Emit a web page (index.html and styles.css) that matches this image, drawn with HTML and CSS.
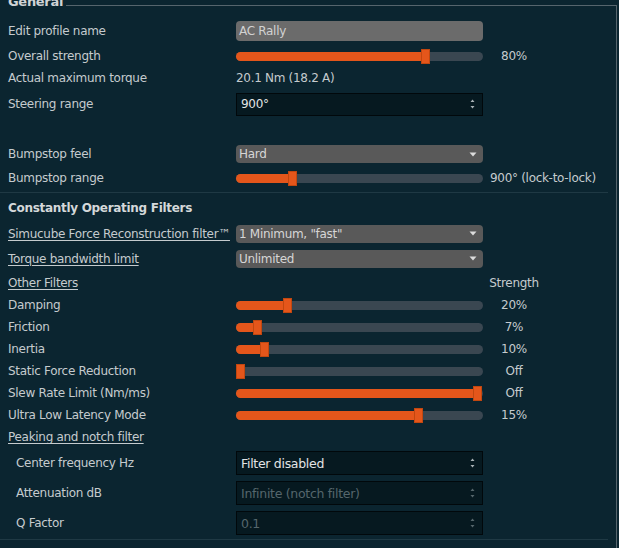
FILE: index.html
```html
<!DOCTYPE html>
<html>
<head>
<meta charset="utf-8">
<link rel="stylesheet" href="styles.css">
</head>
<body>
<div class="frame">
  <div class="legend">General</div>

  <div class="row h24">
    <span class="lbl">Edit profile name</span>
    <div class="edit">AC Rally</div>
  </div>
  <div class="row h26">
    <span class="lbl">Overall strength</span>
    <div class="track"><div class="fill" style="width:190px"><span class="handle"></span></div></div>
    <span class="val">80%</span>
  </div>
  <div class="row h18">
    <span class="lbl">Actual maximum torque</span>
    <span class="txt">20.1 Nm (18.2 A)</span>
  </div>
  <div class="row h34">
    <span class="lbl">Steering range</span>
    <div class="spin"><span>900°</span><svg class="arrows" width="7" height="14" viewBox="0 0 7 14"><path d="M1.5 5 L3.5 2.5 L5.5 5 Z M1.5 9 L3.5 11.5 L5.5 9 Z" fill="#a9b2b6"/></svg></div>
  </div>

  <div class="row h22 gap22">
    <span class="lbl">Bumpstop feel</span>
    <div class="combo"><span>Hard</span><svg class="caret" width="8" height="5" viewBox="0 0 8 5"><path d="M0.5 0.5 L7.5 0.5 L4 4.5 Z" fill="#dcdcdc"/></svg></div>
  </div>
  <div class="row h26">
    <span class="lbl">Bumpstop range</span>
    <div class="track"><div class="fill" style="width:57px"><span class="handle"></span></div></div>
    <span class="val left">900° (lock-to-lock)</span>
  </div>

  <div class="sep"></div>

  <div class="row h29">
    <span class="lbl bold">Constantly Operating Filters</span>
  </div>
  <div class="row h23">
    <span class="lbl link">Simucube Force Reconstruction filter™</span>
    <div class="combo"><span>1 Minimum, "fast"</span><svg class="caret" width="8" height="5" viewBox="0 0 8 5"><path d="M0.5 0.5 L7.5 0.5 L4 4.5 Z" fill="#dcdcdc"/></svg></div>
  </div>
  <div class="row h27">
    <span class="lbl link">Torque bandwidth limit</span>
    <div class="combo"><span>Unlimited</span><svg class="caret" width="8" height="5" viewBox="0 0 8 5"><path d="M0.5 0.5 L7.5 0.5 L4 4.5 Z" fill="#dcdcdc"/></svg></div>
  </div>
  <div class="row h22">
    <span class="lbl link">Other Filters</span>
    <span></span>
    <span class="val">Strength</span>
  </div>
  <div class="row h22">
    <span class="lbl">Damping</span>
    <div class="track"><div class="fill" style="width:52px"><span class="handle"></span></div></div>
    <span class="val">20%</span>
  </div>
  <div class="row h22">
    <span class="lbl">Friction</span>
    <div class="track"><div class="fill" style="width:22px"><span class="handle"></span></div></div>
    <span class="val">7%</span>
  </div>
  <div class="row h22">
    <span class="lbl">Inertia</span>
    <div class="track"><div class="fill" style="width:29px"><span class="handle"></span></div></div>
    <span class="val">10%</span>
  </div>
  <div class="row h22">
    <span class="lbl">Static Force Reduction</span>
    <div class="track"><div class="fill" style="width:5px"><span class="handle"></span></div></div>
    <span class="val">Off</span>
  </div>
  <div class="row h22">
    <span class="lbl">Slew Rate Limit (Nm/ms)</span>
    <div class="track"><div class="fill" style="width:242px"><span class="handle"></span></div></div>
    <span class="val">Off</span>
  </div>
  <div class="row h22">
    <span class="lbl">Ultra Low Latency Mode</span>
    <div class="track"><div class="fill" style="width:183px"><span class="handle"></span></div></div>
    <span class="val">15%</span>
  </div>
  <div class="row h22">
    <span class="lbl link">Peaking and notch filter</span>
  </div>
  <div class="row h30">
    <span class="lbl indent">Center frequency Hz</span>
    <div class="spin tall"><span>Filter disabled</span><svg class="arrows" width="7" height="14" viewBox="0 0 7 14"><path d="M1.5 5 L3.5 2.5 L5.5 5 Z M1.5 9 L3.5 11.5 L5.5 9 Z" fill="#a9b2b6"/></svg></div>
  </div>
  <div class="row h30">
    <span class="lbl indent">Attenuation dB</span>
    <div class="spin tall off"><span>Infinite (notch filter)</span><svg class="arrows" width="7" height="14" viewBox="0 0 7 14"><path d="M1.5 5 L3.5 2.5 L5.5 5 Z M1.5 9 L3.5 11.5 L5.5 9 Z" fill="#56666c"/></svg></div>
  </div>
  <div class="row h30">
    <span class="lbl indent">Q Factor</span>
    <div class="spin tall off"><span>0.1</span><svg class="arrows" width="7" height="14" viewBox="0 0 7 14"><path d="M1.5 5 L3.5 2.5 L5.5 5 Z M1.5 9 L3.5 11.5 L5.5 9 Z" fill="#56666c"/></svg></div>
  </div>
  <div class="sep bottom"></div>
</div>
</body>
</html>
```
FILE: styles.css
```css
html, body {
  margin: 0;
  padding: 0;
  background: #0b2530;
  overflow: hidden;
}
body {
  width: 619px;
  height: 548px;
  font-family: "DejaVu Sans", sans-serif;
  font-size: 12px;
  letter-spacing: -0.3px;
  color: #c5cbce;
}
.frame {
  position: relative;
  margin-top: 5px;
  width: 617px;
  height: 543px;
  border-top: 1px solid #56656d;
  border-right: 1px solid #56656d;
  padding-top: 13px;
  box-sizing: border-box;
}
.legend {
  position: absolute;
  left: 0;
  top: -12px;
  padding: 0 3px 0 8px;
  background: #0b2530;
  font-weight: bold;
  font-size: 13px;
  line-height: 16px;
  color: #d0d4d6;
}
.row {
  display: grid;
  grid-template-columns: 228px 247px 62px;
  align-items: center;
  padding-left: 8px;
}
.h18 { height: 18px; }
.h22 { height: 22px; }
.h23 { height: 23px; }
.h24 { height: 24px; }
.h26 { height: 26px; }
.h27 { height: 27px; }
.h29 { height: 29px; }
.h30 { height: 30px; }
.h34 { height: 34px; }
.gap22 { margin-top: 22px; }
.lbl { white-space: nowrap; }
.bold { font-weight: bold; color: #d4d8da; }
.link { text-decoration: underline; text-underline-offset: 2px; }
.indent { padding-left: 8px; }
.txt { white-space: nowrap; }
.val {
  text-align: center;
  white-space: nowrap;
}
.val.left {
  text-align: left;
  padding-left: 7px;
}
.edit {
  height: 20px;
  background: #6b6b6b;
  border-radius: 4px;
  color: #d2d2d2;
  padding-left: 3px;
  line-height: 20px;
}
.combo {
  height: 18px;
  background: #595959;
  border-radius: 4px;
  color: #d6d6d6;
  padding: 0 6px 0 3px;
  line-height: 18px;
  display: flex;
  align-items: center;
  justify-content: space-between;
}
.caret { display: block; }
.track {
  position: relative;
  height: 9px;
  background: #3a4751;
  border-radius: 5px;
}
.fill {
  position: relative;
  height: 9px;
  background: #e4561b;
  border-radius: 5px 0 0 5px;
}
.handle {
  position: absolute;
  right: -4px;
  top: -3px;
  width: 9px;
  height: 15px;
  background: #e4561b;
  box-shadow: inset 0 0 0 1px #c2470f;
  border-radius: 1px;
}
.spin {
  height: 23px;
  box-sizing: border-box;
  background: #061920;
  border: 1px solid #01080b;
  color: #e2e4e5;
  padding: 0 6px 0 4px;
  display: flex;
  align-items: center;
  justify-content: space-between;
}
.spin.tall { height: 24px; font-size: 12.5px; }
.spin.off { color: #55666c; }
.arrows { display: block; }
.sep {
  width: 608px;
  height: 0;
  border-top: 1px solid #1f3944;
  margin-top: 1px;
}
.sep.bottom { margin-top: 1px; }
```
